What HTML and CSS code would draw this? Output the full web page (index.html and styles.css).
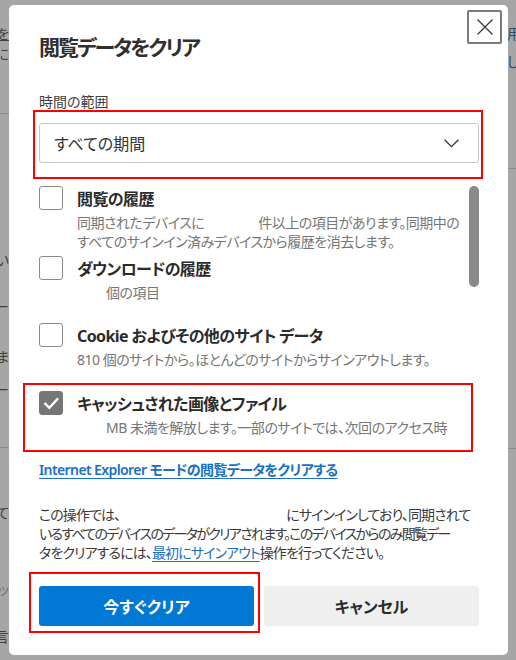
FILE: index.html
```html
<!DOCTYPE html>
<html lang="ja">
<head>
<meta charset="utf-8">
<title>閲覧データをクリア</title>
<link rel="stylesheet" href="styles.css">
</head>
<body>
<div class="page">
  <div class="strip left">
    <div class="frag mt26 ul">設定を</div>
    <div class="frag mt4">ごとに</div>
    <div class="rule mt51"></div>
    <div class="frag mt138">しい</div>
    <div class="frag mt31">データー</div>
    <div class="frag mt34">しま</div>
    <div class="frag mt17">ストリー</div>
    <div class="rule mt49"></div>
    <div class="frag mt57">して</div>
    <div class="frag mt61 dim">ッ</div>
    <div class="frag mt31">言</div>
  </div>
  <div class="strip right">
    <div class="frag mt26 blue">用して</div>
    <div class="frag mt12 blue">し</div>
    <div class="rule mt98"></div>
    <div class="rule mt279"></div>
  </div>
</div>

<div class="dialog" role="dialog" aria-labelledby="dlg-title">
  <button class="close" type="button" aria-label="閉じる">
    <svg width="16" height="16" viewBox="0 0 16 16" aria-hidden="true"><path d="M0.5 0.5 L15.5 15.5 M15.5 0.5 L0.5 15.5" stroke="#333" stroke-width="1.2" fill="none"/></svg>
  </button>
  <h1 class="title" id="dlg-title">閲覧データをクリア</h1>
  <div class="label">時間の範囲</div>
  <div class="select">
    <span>すべての期間</span>
    <svg class="chev" width="15" height="9" viewBox="0 0 15 9" aria-hidden="true"><path d="M0.6 0.8 L7.5 7.6 L14.4 0.8" stroke="#333" stroke-width="1.3" fill="none"/></svg>
  </div>
  <div class="list">
    <div class="item">
      <span class="cb"></span>
      <div class="text">
        <div class="name">閲覧の履歴</div>
        <div class="desc">同期されたデバイスに<span class="blank w54"></span>件以上の項目があります。同期中の<br>すべてのサインイン済みデバイスから履歴を消去します。</div>
      </div>
    </div>
    <div class="item mt5">
      <span class="cb"></span>
      <div class="text">
        <div class="name">ダウンロードの履歴</div>
        <div class="desc"><span class="blank w29"></span>個の項目</div>
      </div>
    </div>
    <div class="item mt21">
      <span class="cb"></span>
      <div class="text">
        <div class="name">Cookie およびその他のサイト データ</div>
        <div class="desc">810 個のサイトから。ほとんどのサイトからサインアウトします。</div>
      </div>
    </div>
    <div class="item mt22">
      <span class="cb on">
        <svg width="24" height="24" viewBox="0 0 24 24" aria-hidden="true"><path d="M6.3 12.8 L10.3 16.8 L18.3 8.3" stroke="#fff" stroke-width="2.4" fill="none" stroke-linecap="square"/></svg>
      </span>
      <div class="text">
        <div class="name">キャッシュされた画像とファイル</div>
        <div class="desc"><span class="blank w29"></span>MB 未満を解放します。一部のサイトでは、次回のアクセス時</div>
      </div>
    </div>
    <div class="thumb"></div>
  </div>
  <a class="ie-link" href="#">Internet Explorer モードの閲覧データをクリアする</a>
  <p class="note">この操作では、<span class="blank w166"></span>にサインインしており、同期されて<br><span class="tight">いるすべてのデバイスのデータがクリアされます。このデバイスからのみ閲覧デー</span><br>タをクリアするには、<a href="#">最初にサインアウト</a>操作を行ってください。</p>
  <div class="actions">
    <button class="btn primary" type="button">今すぐクリア</button>
    <button class="btn secondary" type="button">キャンセル</button>
  </div>
</div>

<div class="mark m1"></div>
<div class="mark m2"></div>
<div class="mark m3"></div>
</body>
</html>
```

FILE: styles.css
```css
* { box-sizing: border-box; }
html, body { margin: 0; padding: 0; }
body {
  width: 516px;
  height: 660px;
  overflow: hidden;
  position: relative;
  background: #a6a6a6;
  font-family: "Noto Sans", "Noto Sans CJK JP", sans-serif;
  font-feature-settings: "palt";
  color: #333;
}

/* dimmed page behind the modal */
.page {
  height: 660px;
  display: flex;
  justify-content: space-between;
}
.strip { display: flex; flex-direction: column; overflow: hidden; }
.strip.left { width: 9px; }
.strip.right { width: 9px; }
.frag {
  height: 16px;
  line-height: 16px;
  font-size: 14px;
  color: #3f3f3f;
  white-space: nowrap;
  display: flex;
  flex: none;
}
.left .frag { justify-content: flex-end; }
.frag.ul { text-decoration: underline; }
.frag.blue { color: #2d4b73; }
.frag.dim { color: #6b7380; }
.rule { height: 1px; background: #8c8c8c; flex: none; }
.mt4 { margin-top: 4px; }
.mt5 { margin-top: 5px; }
.mt12 { margin-top: 12px; }
.mt17 { margin-top: 17px; }
.mt21 { margin-top: 21px; }
.mt22 { margin-top: 22px; }
.mt26 { margin-top: 26px; }
.mt31 { margin-top: 31px; }
.mt34 { margin-top: 34px; }
.mt49 { margin-top: 49px; }
.mt51 { margin-top: 51px; }
.mt57 { margin-top: 57px; }
.mt61 { margin-top: 61px; }
.mt98 { margin-top: 98px; }
.mt138 { margin-top: 138px; }
.mt279 { margin-top: 279px; }

/* dialog */
.dialog {
  position: absolute;
  left: 9px;
  top: 5px;
  width: 499px;
  height: 650px;
  background: #fff;
  border-radius: 5px;
  padding: 27px 29px 29px 30px;
  display: flex;
  flex-direction: column;
}
.close {
  position: absolute;
  top: 5px;
  right: 6px;
  width: 35px;
  height: 34px;
  padding: 0;
  border: 2px solid #7a7a7a;
  border-radius: 2px;
  background: #fff;
  display: flex;
  align-items: center;
  justify-content: center;
}
.title {
  margin: 0;
  font-size: 21px;
  line-height: 30px;
  font-weight: 700;
  letter-spacing: -2px;
  color: #2f2f2f;
}
.label {
  margin-top: 30px;
  font-size: 14px;
  line-height: 20px;
  color: #3d3d3d;
}
.select {
  margin-top: 11px;
  height: 40px;
  flex: none;
  border: 1px solid #c8c8c8;
  border-radius: 3px;
  display: flex;
  align-items: center;
  justify-content: space-between;
  padding: 0 19px 0 14px;
  font-size: 16px;
  color: #333;
}
.chev { display: block; }

.list {
  margin-top: 17px;
  height: 258px;
  flex: none;
  padding-top: 6px;
  overflow: hidden;
  position: relative;
}
.item { display: flex; gap: 14px; align-items: flex-start; }
.cb {
  flex: none;
  width: 24px;
  height: 24px;
  border: 1px solid #8a8a8a;
  border-radius: 3px;
  background: #fff;
}
.cb.on {
  background: #767676;
  border-color: #767676;
  display: flex;
  align-items: center;
  justify-content: center;
}
.cb.on svg { display: block; flex: none; }
.name {
  font-size: 16px;
  line-height: 27px;
  font-weight: 700;
  letter-spacing: -0.6px;
  color: #2b2b2b;
  white-space: nowrap;
}
.desc {
  font-size: 14px;
  line-height: 19px;
  letter-spacing: -0.5px;
  color: #767676;
  white-space: nowrap;
}
.blank { display: inline-block; }
.w29 { width: 29px; }
.w54 { width: 54px; }
.w166 { width: 166px; }
.thumb {
  position: absolute;
  right: 0;
  top: 6px;
  width: 10px;
  height: 101px;
  border-radius: 5px;
  background: #8a8a8a;
}

.ie-link {
  margin-top: 22px;
  align-self: flex-start;
  font-size: 14px;
  line-height: 20px;
  font-weight: 600;
  letter-spacing: -0.6px;
  color: #1a6fc4;
  text-decoration: underline;
  text-underline-offset: 3px;
}
.note {
  margin: 25px 0 0;
  font-size: 14px;
  line-height: 19px;
  letter-spacing: -0.9px;
  color: #3b3b3b;
  white-space: nowrap;
}
.note .tight { letter-spacing: -1.7px; }
.note a {
  color: #1a6fc4;
  text-decoration: underline;
  text-underline-offset: 3px;
}
.actions {
  margin-top: 24px;
  display: grid;
  grid-template-columns: 1fr 1fr;
  gap: 10px;
}
.btn {
  height: 40px;
  border: 0;
  border-radius: 3px;
  font-family: inherit;
  font-feature-settings: "palt";
  font-size: 16px;
  font-weight: 700;
}
.primary { background: #0078d4; color: #fff; }
.secondary { background: #efefef; color: #2b2b2b; }

/* annotation boxes */
.mark { position: absolute; border: 2px solid #ff0000; }
.m1 { left: 33px; top: 110px; width: 450px; height: 69px; }
.m2 { left: 23px; top: 383px; width: 450px; height: 69px; }
.m3 { left: 29px; top: 572px; width: 231px; height: 61px; }
```
